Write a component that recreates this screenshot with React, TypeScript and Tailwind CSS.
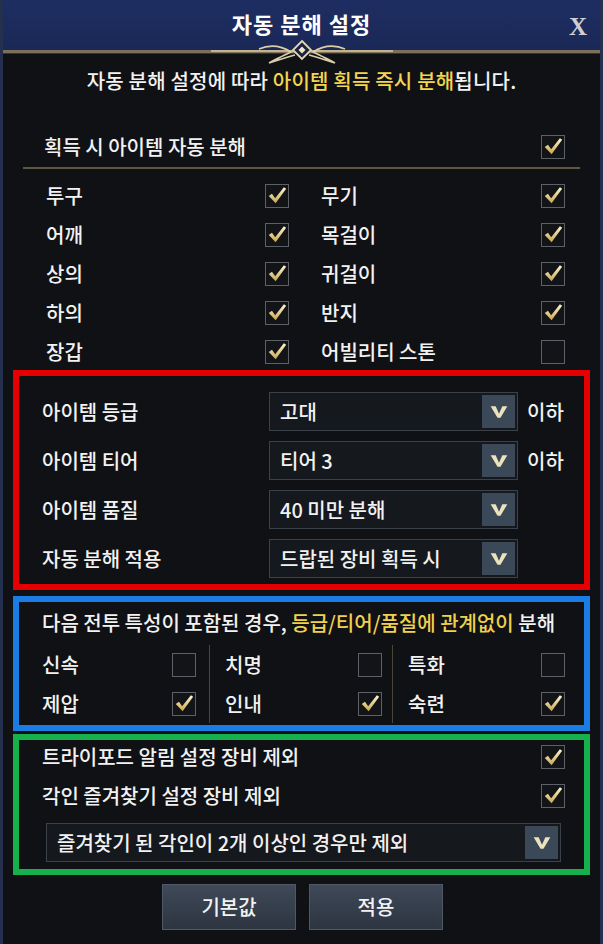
import React from "react";

const font = { fontFamily: '"Noto Sans CJK KR", "Noto Sans", sans-serif' };

const Check = ({ on }: { on: boolean }) => (
    <div className="w-[24px] h-[24px] border border-[#5c6168] bg-[#121418] flex items-center justify-center shrink-0">
        {on && (
            <svg width="23" height="23" viewBox="0 0 24 24">
                <defs>
                    <linearGradient id="ck" x1="0" y1="0" x2="0" y2="1">
                        <stop offset="0" stopColor="#fff6d2" />
                        <stop offset="1" stopColor="#c8a64c" />
                    </linearGradient>
                </defs>
                <path d="M3 12.5 L6.5 10 L10 15 L19.5 3 L22 4.5 L10.5 20.5 Z" fill="url(#ck)" />
            </svg>
        )}
    </div>
);

const Arrow = () => (
    <div className="w-[33px] self-stretch bg-[#3b4858] flex items-center justify-center my-[2px] mr-[2px]">
        <svg width="20" height="18" viewBox="0 0 24 20">
            <path d="M2 3 L8 3 L12 12 L16 3 L22 3 L13.8 17 L10.2 17 Z" fill="#ece3bd" />
        </svg>
    </div>
);

const Select = ({ value, w }: { value: string; w: string }) => (
    <div className={`${w} h-[39px] flex items-stretch bg-[#15181d] border border-[#3b4149]`}>
        <div className="flex-1 flex items-center pl-[10px] text-[20px] text-[#f1f1f1]">{value}</div>
        <Arrow />
    </div>
);

const App = () => {
    const parts: [string, boolean, string, boolean][] = [
        ["투구", true, "무기", true],
        ["어깨", true, "목걸이", true],
        ["상의", true, "귀걸이", true],
        ["하의", true, "반지", true],
        ["장갑", true, "어빌리티 스톤", false],
    ];

    const filters: [string, string, boolean][] = [
        ["아이템 등급", "고대", true],
        ["아이템 티어", "티어 3", true],
        ["아이템 품질", "40 미만 분해", false],
        ["자동 분해 적용", "드랍된 장비 획득 시", false],
    ];

    const stats: [string, boolean][][] = [
        [["신속", false], ["제압", true]],
        [["치명", false], ["인내", true]],
        [["특화", false], ["숙련", true]],
    ];

    return (
        <div style={font} className="w-[603px] h-[944px] bg-[#0f1115] flex flex-col border-l-[3px] border-r-[3px] border-[#24304d] text-[#f2f2f2] font-medium overflow-hidden">
            {/* header */}
            <div className="h-[50px] shrink-0 bg-gradient-to-b from-[#1e2e62] to-[#1a2857] relative flex items-center justify-center">
                <div className="text-[22px] font-bold text-white tracking-[1px] mt-[-4px]">자동 분해 설정</div>
                <div className="absolute right-[13px] top-[8px] text-[25px] font-bold text-[#cfcfcf]" style={{ fontFamily: '"Liberation Serif", serif' }}>
                    X
                </div>
            </div>
            <div className="relative h-[4px] shrink-0 bg-[#7c705a] border-b border-[#3b3428]">
                <svg className="absolute left-1/2 -translate-x-1/2 -top-[11px]" width="190" height="28" viewBox="0 0 190 28">
                    <path d="M4 12 L186 12" stroke="#d8caa2" strokeWidth="1.5" />
                    <path d="M52 10 C66 4 76 8 84 13 C77 16 70 20 62 24 C72 21 80 18 88 16" stroke="#d9cda8" strokeWidth="1.8" fill="none" />
                    <path d="M138 10 C124 4 114 8 106 13 C113 16 120 20 128 24 C118 21 110 18 102 16" stroke="#d9cda8" strokeWidth="1.8" fill="none" />
                    <path d="M95 2 L104 11 L95 20 L86 11 Z" fill="#1a2240" stroke="#e2d6b2" strokeWidth="1.8" />
                    <path d="M95 7.5 L98.5 11 L95 14.5 L91.5 11 Z" fill="#f0e6c6" />
                </svg>
            </div>

            {/* subtitle */}
            <div className="mt-[14px] text-center text-[20px] leading-[26px] tracking-[0.2px]">
                자동 분해 설정에 따라 <span className="text-[#f4d64e]">아이템 획득 즉시 분해</span>됩니다.
            </div>

            {/* main toggle */}
            <div className="mt-[33px] h-[39px] flex items-center justify-between pl-[41px] pr-[35px] text-[20px]">
                <span>획득 시 아이템 자동 분해</span>
                <Check on />
            </div>
            <div className="mx-[20px] h-[2px] bg-[#5e5640] mt-[1px] mb-[7px]" />

            {/* parts grid */}
            <div className="flex flex-col pl-[43px] pr-[35px]">
                {parts.map(([a, ac, b, bc], i) => (
                    <div key={i} className="h-[39px] flex items-center text-[20px]">
                        <div className="w-[243px] flex items-center justify-between">
                            <span>{a}</span>
                            <Check on={ac} />
                        </div>
                        <div className="flex-1 flex items-center justify-between pl-[32px]">
                            <span>{b}</span>
                            <Check on={bc} />
                        </div>
                    </div>
                ))}
            </div>

            {/* red box */}
            <div className="mx-[10px] -mt-px border-[6px] border-[#e40000] bg-[#0f1115] pt-[16px] pb-[6px] pl-[23px] flex flex-col gap-[10px]">
                {filters.map(([label, value, below], i) => (
                    <div key={i} className="h-[39px] flex items-center text-[20px]">
                        <span className="w-[227px]">{label}</span>
                        <Select value={value} w="w-[249px]" />
                        {below && <span className="ml-[9px]">이하</span>}
                    </div>
                ))}
            </div>

            {/* blue box */}
            <div className="mx-[10px] mt-[6px] border-[6px] border-[#1b7de3] bg-[#0f1115] pt-[8px] pb-[2px] pl-[23px] pr-[19px]">
                <div className="text-[20px] leading-[26px] whitespace-nowrap">
                    다음 전투 특성이 포함된 경우, <span className="text-[#f0d04c]">등급/티어/품질에 관계없이</span> 분해
                </div>
                <div className="flex mt-[9px] text-[20px]">
                    {stats.map((col, ci) => (
                        <div key={ci} className={`flex flex-col ${ci === 0 ? "w-[168px] pr-[13px]" : ci === 1 ? "w-[183px] pl-[15px] pr-[10px]" : "flex-1 pl-[15px]"} ${ci < 2 ? "border-r border-[#4a4638]" : ""}`}>
                            {col.map(([name, on], ri) => (
                                <div key={ri} className="h-[39px] flex items-center justify-between">
                                    <span>{name}</span>
                                    <Check on={on} />
                                </div>
                            ))}
                        </div>
                    ))}
                </div>
            </div>

            {/* green box */}
            <div className="mx-[10px] mt-[3px] border-[6px] border-[#16b04c] bg-[#0f1115] pl-[23px] pr-[19px] pb-[7px]">
                <div className="h-[34px] flex items-center justify-between text-[20px]">
                    <span>트라이포드 알림 설정 장비 제외</span>
                    <Check on />
                </div>
                <div className="h-[39px] flex items-center justify-between text-[20px] mt-[2px]">
                    <span>각인 즐겨찾기 설정 장비 제외</span>
                    <Check on />
                </div>
                <div className="mt-[8px] pl-[4px] pr-[4px]">
                    <Select value="즐겨찾기 된 각인이 2개 이상인 경우만 제외" w="w-full" />
                </div>
            </div>

            {/* buttons */}
            <div className="flex justify-center gap-[13px] mt-[9px] pl-[2px]">
                {["기본값", "적용"].map((t) => (
                    <div key={t} className="w-[134px] h-[46px] flex items-center justify-center text-[20px] bg-gradient-to-b from-[#3f4957] to-[#2d3541] border border-[#4e5866]">
                        {t}
                    </div>
                ))}
            </div>
        </div>
    );
};

export default App;
